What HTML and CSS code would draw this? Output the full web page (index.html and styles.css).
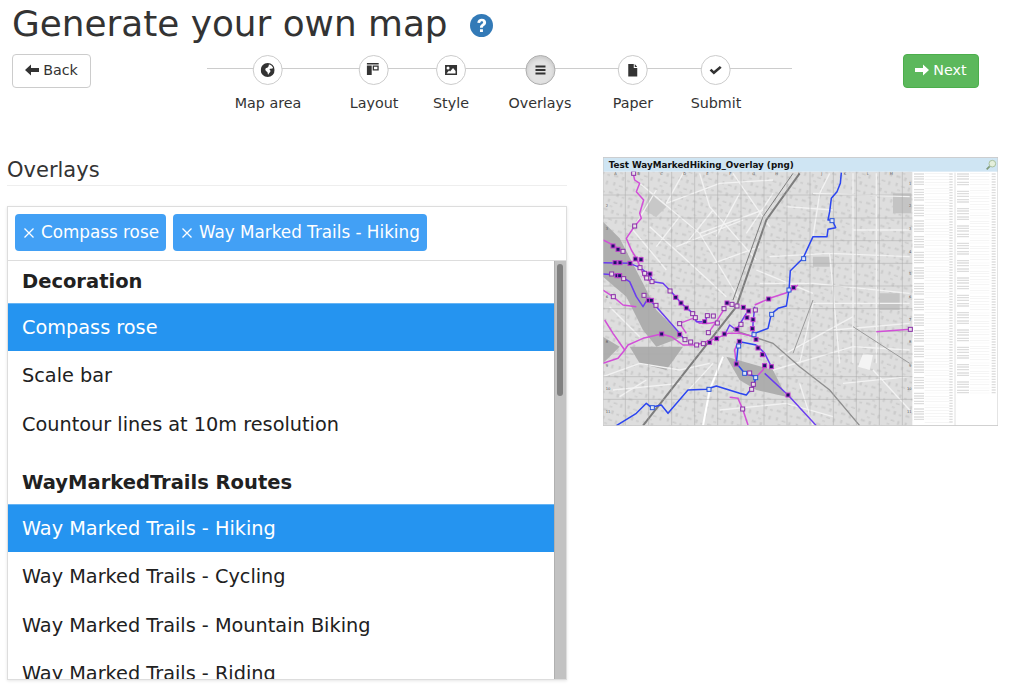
FILE: index.html
```html
<!DOCTYPE html>
<html lang="en">
<head>
    <meta charset="UTF-8">
    <title>Generate your own map</title>
    <link rel="stylesheet" href="styles.css">
</head>
<body>
    <!-- Page title -->
    <h1 class="page-title">
        Generate your own map
        <svg class="help-icon" viewBox="0 0 24 24"><circle cx="12" cy="12" r="12" fill="#337ab7"/><path d="M7.6 9.2C7.9 6.4 9.8 5 12.3 5c2.7 0 4.5 1.6 4.5 3.8 0 1.7-.9 2.6-2.1 3.4-1 .7-1.3 1.1-1.3 2.1h-3c0-1.8.5-2.7 1.8-3.6 1-.7 1.5-1.1 1.5-1.8 0-.8-.6-1.3-1.4-1.3-.9 0-1.5.6-1.7 1.8zM10.4 15.8h3.1v3h-3.1z" fill="#fff"/></svg>
    </h1>

    <!-- Wizard navigation -->
    <div class="wizard">
        <button class="btn btn-back" type="button">
            <svg class="btn-icon" viewBox="0 0 14 14"><path d="M0 7l6-5.5V5h8v4H6v3.500z" fill="#333"/></svg>
            Back
        </button>
        <ol class="steps">
            <li class="step step-area">
                <span class="step-circle"><svg viewBox="0 0 14 14"><path fill-rule="evenodd" d="M7 0a7 7 0 1 0 0 14A7 7 0 0 0 7 0zM8 1.200c2 .3 3.800 1.900 4.500 3.800-1 .4-1.600 1.100-2.900.7-.9-.3-.9.9-.3 1.300.8.500.5 1.800-.3 2.600-.5.500-1.100 1.500-1.500 2.100-.6-.8-.3-2-.9-2.800-.7-.8-2-1.300-2-2.500 0-1.300 1.800-1.500 2.600-2.100.7-.5.800-1.800 1.100-3.100z" fill="#333"/></svg></span>
                Map area
            </li>
            <li class="step step-layout">
                <span class="step-circle"><svg viewBox="0 0 14 14"><path fill-rule="evenodd" d="M0 0h12v1.500H0zM0 2.500h5V12H0zM6 2.500h6v5H6zM7.300 3.800v2.400h3.400V3.800z" fill="#333"/></svg></span>
                Layout
            </li>
            <li class="step step-style">
                <span class="step-circle"><svg viewBox="0 0 14 14"><path fill-rule="evenodd" d="M1 2h12v10H1zM4 3.500a1.500 1.500 0 1 0 0 3 1.500 1.500 0 0 0 0-3zM2.500 10.500h9V8L9 5 6 8.500 5 7.500z" fill="#333"/></svg></span>
                Style
            </li>
            <li class="step step-overlays step-active">
                <span class="step-circle"><svg viewBox="0 0 14 14"><path d="M2 2.500h10v2H2zM2 6h10v2H2zM2 9.500h10v2H2z" fill="#333"/></svg></span>
                Overlays
            </li>
            <li class="step step-paper">
                <span class="step-circle"><svg viewBox="0 0 14 14"><path d="M2.500 1H8v4h3.500v8.500h-9zM9 1l2.500 3H9z" fill="#333"/></svg></span>
                Paper
            </li>
            <li class="step step-submit">
                <span class="step-circle"><svg viewBox="0 0 14 14"><path d="M1 7.500l1.800-1.800 2.400 2.300L11.200 3 13 4.800 5.200 11.500z" fill="#333"/></svg></span>
                Submit
            </li>
        </ol>
        <button class="btn btn-next" type="button">
            <svg class="btn-icon" viewBox="0 0 14 14"><path d="M14 7L8 1.500V5H0v4h8v3.500z" fill="#fff"/></svg>
            Next
        </button>
    </div>

    <div class="content">
        <!-- Overlay selection -->
        <section class="overlays">
            <h2 class="section-title">Overlays</h2>
            <div class="picker">
                <div class="chips">
                    <span class="chip"><svg class="chip-x" viewBox="0 0 12 12"><path d="M1.500 1.500l9 9M10.500 1.500l-9 9" stroke="#fff" stroke-width="1.300" fill="none"/></svg>Compass rose</span>
                    <span class="chip"><svg class="chip-x" viewBox="0 0 12 12"><path d="M1.500 1.500l9 9M10.500 1.500l-9 9" stroke="#fff" stroke-width="1.300" fill="none"/></svg>Way Marked Trails - Hiking</span>
                </div>
                <div class="list">
                    <div class="list-body">
                        <div class="group-label">Decoration</div>
                        <div class="option option-selected">Compass rose</div>
                        <div class="option">Scale bar</div>
                        <div class="option">Countour lines at 10m resolution</div>
                        <div class="group-label group-label-next">WayMarkedTrails Routes</div>
                        <div class="option option-selected">Way Marked Trails - Hiking</div>
                        <div class="option">Way Marked Trails - Cycling</div>
                        <div class="option">Way Marked Trails - Mountain Biking</div>
                        <div class="option">Way Marked Trails - Riding</div>
                    </div>
                    <div class="scrollbar"><div class="scrollbar-thumb"></div></div>
                </div>
            </div>
        </section>

        <!-- Map preview -->
        <figure class="preview">
            <svg class="preview-map" viewBox="10 22 1185 805">
                <defs>
                    <filter id="soft"><feGaussianBlur stdDeviation="1.500"/></filter>
                    <pattern id="blocks" width="62" height="52" patternUnits="userSpaceOnUse" patternTransform="rotate(18)">
                        <path d="M3 4h13v6H3zM28 3h7v11h-7zM45 8h8v5h-8zM8 26h6v10H8zM26 30h12v5H26zM48 28h6v12h-6zM18 44h9v4h-9z" fill="#cbcbcb"/>
                    </pattern>
                    <rect id="m" x="-6" y="-6" width="12" height="12" fill="#1b1464" stroke="#c23bd0" stroke-width="3"/>
                    <rect id="o" x="-6" y="-6" width="12" height="12" fill="#e8e0e8" stroke="#8a2fa8" stroke-width="3"/>
                    <rect id="b" x="-6" y="-6" width="12" height="12" fill="#dfe6f8" stroke="#2a55d8" stroke-width="3"/>
                </defs>
                <rect x="10" y="22" width="1185" height="805" fill="#fff"/>
                <g filter="url(#soft)">
                    <rect x="10" y="65" width="928" height="762" fill="#dedede"/>
                    <rect x="10" y="65" width="928" height="762" fill="url(#blocks)"/>
                    <!-- darker land -->
                    <g fill="#aeaeae">
                        <path d="M10 215L60 265 130 400 170 480 250 560 170 590 130 540 80 440 10 380z"/>
                        <path d="M90 590L250 590 200 660 120 640z"/>
                        <path d="M380 620L520 660 560 740 470 720 420 690z"/>
                        <path d="M10 560L60 590 10 640z"/>
                        <path d="M150 130l50 40-30 30-40-20z" fill="#c8c8c8"/>
                        <path d="M880 130h55v60h-55zM640 320h50v30h-50zM840 430h60v50h-60z" fill="#c4c4c4"/>
                    </g>
                    <path d="M790 610l30 5-10 45-35-10z" fill="#f4f4f4"/>
                    <!-- streets -->
                    <g fill="none" stroke="#f2f2f2" stroke-width="4">
                        <path d="M120 100L300 250 420 450M200 160L360 100 520 90M300 250L490 180M150 230L250 320 380 440M230 290L430 210M340 340L480 290"/>
                        <path d="M300 70L330 170 470 330M400 70L510 230M250 70L200 160M510 320L690 310 930 320M640 260L660 130 690 70"/>
                        <path d="M480 400L640 400 930 430M640 130L930 140M760 70V640M830 70V640M690 310L720 640M640 460L600 640"/>
                        <path d="M520 660L760 590 930 600M640 460H930M470 360L640 430M560 170L700 180"/>
                        <path d="M10 680L120 640 240 660 330 640M40 720L240 700M360 780L560 760 700 800M730 700L930 680M600 700L640 827M820 660L930 780"/>
                        <path d="M170 120L110 220M240 200L170 290M340 180L260 280M420 130L350 260M520 130L440 250M100 240L200 360M760 240H930M700 540L930 520M540 620L760 500M30 470L120 560M60 740L140 690M230 760L340 640"/>
                    </g>
                    <!-- railway -->
                    <g fill="none" stroke="#7d7d7d">
                        <path d="M600 70L500 210 410 470 300 610 130 827" stroke-width="6"/>
                        <path d="M580 70L490 200 400 450" stroke-width="3"/>
                        <path d="M400 540L520 580 600 650 690 720 780 827" stroke-width="4" stroke="#8e8e8e"/>
                        <path d="M370 620L330 720 310 827" stroke="#fff" stroke-width="6"/>
                        <path d="M640 450L580 610M760 530L930 640" stroke-width="3" stroke="#9a9a9a"/>
                    </g>
                    <!-- sheet grid -->
                    <g fill="none" stroke="#a8a8a8" stroke-width="1.500">
                        <path d="M77 65V827M147 65V827M216 65V827M285 65V827M354 65V827M424 65V827M493 65V827M562 65V827M631 65V827M701 65V827M770 65V827M839 65V827M908 65V827"/>
                        <path d="M10 135H938M10 204H938M10 272H938M10 340H938M10 408H938M10 476H938M10 544H938M10 612H938M10 680H938M10 748H938"/>
                    </g>
                </g>
                <!-- street index -->
                <g fill="none" stroke="#7a7a7a" filter="url(#soft)">
                    <path d="M958 70v750" stroke-width="30" stroke-dasharray="4 4 4 3 4 5 4 3 4 12" stroke-opacity=".26"/>
                    <path d="M1012 70v750" stroke-width="74" stroke-dasharray="2 6 2 8 2 6" stroke-opacity=".1"/>
                    <path d="M1054 70v750" stroke-width="10" stroke-dasharray="4 4" stroke-opacity=".26"/>
                    <path d="M1090 70v660" stroke-width="36" stroke-dasharray="4 3 4 4 4 6 4 3 4 16" stroke-opacity=".26"/>
                    <path d="M1140 70v660" stroke-width="58" stroke-dasharray="2 6 2 8 2 5" stroke-opacity=".1"/>
                    <path d="M1182 70v660" stroke-width="12" stroke-dasharray="4 4" stroke-opacity=".26"/>
                </g>
                <path d="M1066 68V827" stroke="#d0d0d0" stroke-width="2"/>
                <!-- routes -->
                <g fill="none" stroke-width="4.500" stroke-linejoin="round">
                    <g stroke="#d24fd8">
                        <path d="M100 68l5 22 15 10-10 25 22 25-12 40 5 15-20 23-25 37 15 35 15 25 12 27 13 33 20 10"/>
                        <path d="M10 640L55 625 75 600 85 585 130 565 185 552 215 560 250 585 290 585 350 565 385 550 420 550 465 560"/>
                        <path d="M10 270l30 15 30 20M15 510l25 40 35 50M10 420l30 20 30 25 40 5"/>
                        <path d="M390 742l25 3 15 35 15 45M830 545L932 538M465 465l45-20 60-20 25-20"/>
                        <path d="M240 520l40-15 20 15 30 0 25-5M240 520l20 30M325 550l25-35 25-40"/>
                        <path d="M410 640l-5-40 10-25M440 670l30 10 20-20 5-15"/>
                    </g>
                    <g stroke="#6a3df0">
                        <path d="M10 338l80 2 30 12 30 23 10 20 30 5 20 20 35 40 35 30 10 25h25l10-20"/>
                        <path d="M10 372l45 3 35 20 20 45 20 30 15-25 25 25 70 80 15 20"/>
                        <path d="M495 670l70 65 85 92M470 585l25 25 20 40M465 470l-5 50v30M440 490l-30 50-20-15-15 30"/>
                    </g>
                    <g stroke="#2b45f0">
                        <path d="M725 68l-3 32-10 25-17 20-5 40-5 25h13l10 23-23 5-3 22h-42l-30 65-38 37-4 58-8 48-25 7-20 17-10 43-40 15"/>
                        <path d="M50 827l60-37 30-30 15 12 30-7 20 25 60-70 55-2 30-10 70 22 20 5 20-25 10-30"/>
                        <path d="M420 575l50 10M415 590l-5 50 25 30 35 10"/>
                    </g>
                </g>
                <!-- route markers -->
                <g>
                    <use href="#o" x="102" y="70"/><use href="#o" x="105" y="228"/><use href="#m" x="40" y="288"/><use href="#m" x="55" y="298"/><use href="#o" x="70" y="304"/>
                    <use href="#m" x="107" y="327"/><use href="#m" x="124" y="329"/><use href="#o" x="121" y="353"/><use href="#m" x="46" y="338"/><use href="#m" x="61" y="338"/><use href="#m" x="91" y="340"/>
                    <use href="#o" x="36" y="372"/><use href="#m" x="52" y="377"/><use href="#m" x="60" y="377"/><use href="#o" x="72" y="386"/><use href="#o" x="41" y="440"/>
                    <use href="#o" x="135" y="370"/><use href="#m" x="151" y="372"/><use href="#o" x="141" y="384"/><use href="#o" x="157" y="395"/><use href="#o" x="211" y="423"/><use href="#m" x="228" y="442"/><use href="#m" x="244" y="459"/><use href="#m" x="260" y="474"/><use href="#o" x="279" y="491"/><use href="#o" x="287" y="503"/><use href="#m" x="315" y="515"/><use href="#o" x="323" y="497"/><use href="#o" x="341" y="498"/>
                    <use href="#o" x="133" y="436"/><use href="#m" x="147" y="451"/><use href="#m" x="155" y="451"/><use href="#o" x="169" y="466"/><use href="#o" x="240" y="521"/><use href="#m" x="240" y="553"/><use href="#m" x="186" y="552"/><use href="#o" x="256" y="569"/><use href="#o" x="273" y="576"/><use href="#o" x="291" y="585"/><use href="#o" x="311" y="581"/><use href="#m" x="330" y="577"/><use href="#m" x="351" y="566"/><use href="#m" x="374" y="552"/><use href="#o" x="326" y="548"/><use href="#o" x="353" y="519"/><use href="#o" x="373" y="476"/>
                    <use href="#m" x="382" y="459"/><use href="#o" x="397" y="463"/><use href="#o" x="412" y="468"/><use href="#m" x="431" y="472"/><use href="#m" x="447" y="483"/><use href="#o" x="467" y="480"/><use href="#m" x="442" y="503"/><use href="#m" x="460" y="509"/><use href="#o" x="424" y="523"/><use href="#m" x="412" y="538"/><use href="#m" x="458" y="536"/><use href="#b" x="463" y="554"/><use href="#m" x="469" y="568"/><use href="#m" x="507" y="447"/><use href="#b" x="568" y="420"/><use href="#m" x="582" y="413"/><use href="#b" x="612" y="326"/><use href="#b" x="697" y="212"/><use href="#b" x="516" y="493"/>
                    <use href="#m" x="419" y="574"/><use href="#b" x="417" y="588"/><use href="#m" x="410" y="642"/><use href="#b" x="435" y="670"/><use href="#o" x="450" y="669"/><use href="#b" x="468" y="683"/><use href="#o" x="461" y="703"/><use href="#o" x="456" y="718"/><use href="#m" x="475" y="594"/><use href="#m" x="488" y="614"/><use href="#m" x="495" y="647"/><use href="#m" x="515" y="650"/><use href="#m" x="565" y="735"/><use href="#o" x="429" y="777"/><use href="#b" x="158" y="773"/><use href="#b" x="328" y="718"/><use href="#o" x="932" y="538"/>
                </g>
                <!-- sheet labels -->
                <g class="map-labels">
                    <text x="44" y="76">A</text><text x="113" y="76">B</text><text x="182" y="76">C</text><text x="251" y="76">D</text><text x="320" y="76">E</text><text x="389" y="76">F</text><text x="458" y="76">G</text><text x="527" y="76">H</text><text x="596" y="76">I</text><text x="665" y="76">J</text><text x="732" y="76">K</text><text x="801" y="76">L</text><text x="870" y="76">M</text>
                    <text x="18" y="172">2</text><text x="18" y="240">3</text><text x="18" y="444">6</text><text x="18" y="580">8</text><text x="18" y="652">9</text><text x="18" y="720">10</text><text x="18" y="788">11</text>
                    <text x="928" y="104">1</text><text x="928" y="172">2</text><text x="928" y="240">3</text><text x="928" y="308">4</text><text x="928" y="376">5</text><text x="928" y="444">6</text><text x="928" y="512">7</text><text x="928" y="580">8</text><text x="928" y="652">9</text><text x="922" y="720">10</text><text x="922" y="788">11</text>
                </g>
                <!-- title band -->
                <rect x="10" y="22" width="1185" height="43" fill="#cfe5f3"/>
                <text class="map-title" x="27" y="54">Test WayMarkedHiking_Overlay (png)</text>
                <g fill="none" stroke="#a8c09f" stroke-width="3">
                    <circle cx="1178" cy="41" r="10" fill="#e4efdc"/>
                    <path d="M1170 49l-9 9" stroke-width="5" stroke="#7f9a78"/>
                </g>
                <rect x="10" y="22" width="1185" height="805" fill="none" stroke="#c8c8c8" stroke-width="3"/>
            </svg>
        </figure>
    </div>
</body>
</html>
```

FILE: styles.css
```css
* {
    box-sizing: border-box;
}

html, body {
    height: 100%;
    overflow: hidden;
}

body {
    margin: 0;
    font-family: 'DejaVu Sans', sans-serif;
    font-size: 14px;
    color: #333;
    background: #fff;
}

/* Title */
.page-title {
    margin: 0;
    padding: 0 0 8px 12px;
    height: 54px;
    display: flex;
    align-items: center;
    font-size: 35.840px;
    font-weight: 400;
    line-height: 47px;
}

.help-icon {
    width: 23px;
    height: 23px;
    margin-left: 22px;
    margin-top: 5px;
}

/* Wizard */
.wizard {
    display: flex;
    align-items: flex-start;
    padding-left: 12px;
    height: 103px;
}

.btn {
    display: flex;
    align-items: center;
    justify-content: center;
    gap: 4px;
    height: 34px;
    padding: 0 0 2px;
    font-family: inherit;
    font-size: 14.300px;
    border: 1px solid #ccc;
    border-radius: 4px;
    background: #fff;
    color: #333;
}

.btn-back {
    width: 79px;
}

.btn-next {
    width: 76px;
    margin-left: 111px;
    background: #5cb85c;
    border-color: #4cae4c;
    color: #fff;
}

.btn-icon {
    width: 14px;
    height: 14px;
}

.steps {
    list-style: none;
    margin: 0 0 0 116px;
    padding: 0;
    width: 585px;
    height: 60px;
    display: block;
    position: relative;
    background: linear-gradient(#ccc, #ccc) 0 14px / 100% 1px no-repeat;
}

.step {
    position: absolute;
    top: 1px;
    transform: translateX(-50%);
    display: flex;
    flex-direction: column;
    align-items: center;
    gap: 10px;
    white-space: nowrap;
    font-size: 14.300px;
    line-height: 17px;
}

.step-area { left: 61px; }
.step-layout { left: 167px; }
.step-style { left: 244px; }
.step-overlays { left: 333px; }
.step-paper { left: 426px; }
.step-submit { left: 509px; }

.step-circle {
    width: 30px;
    height: 30px;
    border: 1px solid #ccc;
    border-radius: 50%;
    background: #fff;
    display: flex;
    align-items: center;
    justify-content: center;
}

.step-circle svg {
    width: 14px;
    height: 14px;
}

.step-active .step-circle {
    background: #e2e2e2;
    border-color: #adadad;
    box-shadow: inset 0 2px 4px rgba(0, 0, 0, .125);
}

/* Main columns */
.content {
    display: flex;
    align-items: flex-start;
    padding-left: 7px;
}

.overlays {
    width: 560px;
}

.section-title {
    margin: 0;
    height: 29px;
    font-size: 21px;
    font-weight: 400;
    line-height: 26px;
    border-bottom: 1px solid #eee;
}

/* Selected chips and list */
.picker {
    margin-top: 20px;
    border: 1px solid #ddd;
    box-shadow: 0 1px 3px rgba(0, 0, 0, .1);
}

.chips {
    display: flex;
    gap: 7px;
    padding: 7px;
    height: 54px;
    border-bottom: 1px solid #ddd;
}

.chip {
    display: flex;
    align-items: center;
    gap: 6px;
    height: 37px;
    padding: 0 7px 1px 8px;
    border-radius: 4px;
    background: #42a0f5;
    color: #fff;
    font-size: 16.800px;
    white-space: nowrap;
}

.chip-x {
    width: 12px;
    height: 12px;
    margin-top: 2px;
}

/* List with its always visible scrollbar */
.list {
    display: flex;
    height: 418px;
    overflow: hidden;
}

.list-body {
    flex: 1;
    min-width: 0;
    color: #212121;
    font-size: 19.300px;
}

.scrollbar {
    width: 12px;
    padding: 3px 3px 0 3px;
    background: #c2c2c2;
    border-left: 1px solid #b0b0b0;
}

.scrollbar-thumb {
    width: 6px;
    height: 132px;
    margin-left: -1px;
    background: #808080;
    border-radius: 3px;
}

.group-label {
    height: 41.500px;
    padding: 7px 14px 0;
    font-weight: 700;
    font-size: 19.500px;
    line-height: 28.500px;
}

.group-label-next {
    margin-top: 14px;
}

.option {
    height: 48.500px;
    padding: 11px 14px 9px;
    line-height: 28.500px;
    white-space: nowrap;
}

.option-selected {
    background: #2594f0;
    color: #fff;
    box-shadow: inset 0 1px 0 rgba(255, 255, 255, .3);
}

/* Preview image */
.preview {
    margin: 0 0 0 36px;
}

.preview-map {
    display: block;
    width: 395px;
    height: 269px;
}

.map-title {
    font-family: 'DejaVu Sans', sans-serif;
    font-weight: 700;
    font-size: 26.400px;
    fill: #111;
}

.map-labels text {
    font-family: 'DejaVu Sans', sans-serif;
    font-size: 11px;
    fill: #555;
}
```
